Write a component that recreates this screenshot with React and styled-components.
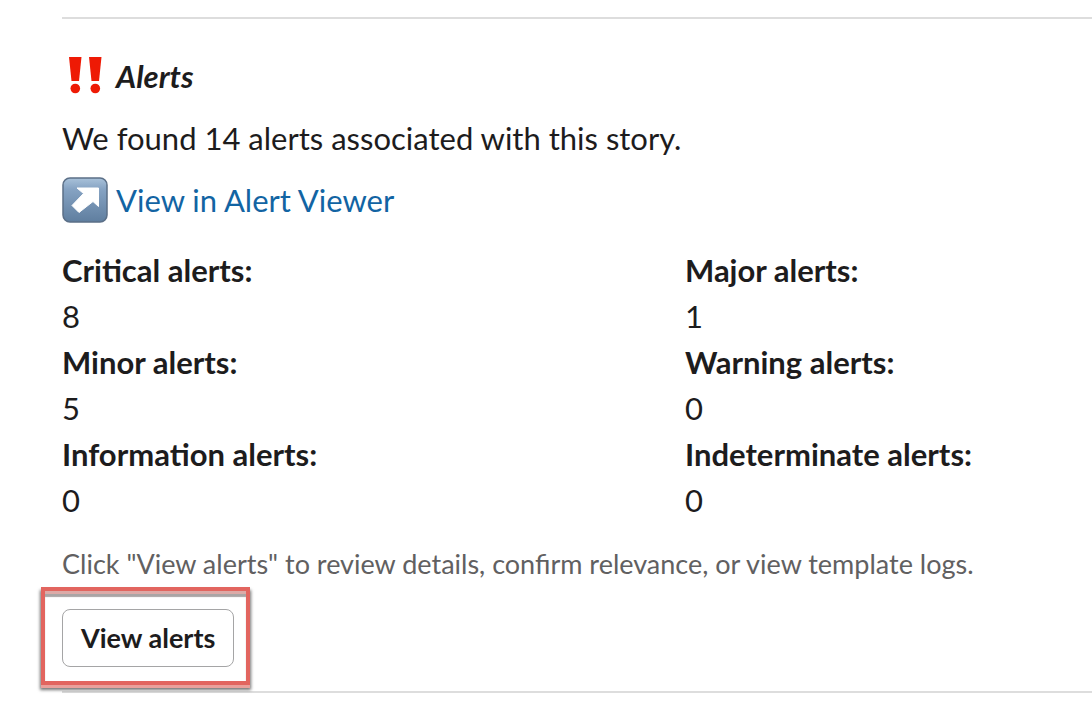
import React from "react";
import styled, { createGlobalStyle } from "styled-components";

const GlobalStyle = createGlobalStyle`
  *, *::before, *::after { box-sizing: border-box; }
  body {
    margin: 0;
    background: #fff;
    color: #1d1c1d;
    font-family: Lato, "Liberation Sans", sans-serif;
    font-size: 31px;
    line-height: 46px;
  }
`;

const Message = styled.main`
  display: flex;
  flex-direction: column;
  padding: 17px 0 13px 62px;
`;

const Divider = styled.hr`
  width: 100%;
  height: 2px;
  margin: 0;
  border: 0;
  background: #dddddd;
`;

const Section = styled.section`
  display: flex;
  flex-direction: column;
  gap: 16px;
  padding: 34px 0 24px;
`;

const Heading = styled.h2`
  display: flex;
  align-items: center;
  gap: 8px;
  margin: 0;
  font-size: 31px;
  font-weight: 700;
  font-style: italic;
`;

const Paragraph = styled.p`
  margin: 0;
`;

const LinkRow = styled.div`
  display: flex;
  align-items: center;
  gap: 8px;
`;

const ViewerLink = styled.a`
  color: #1264a3;
  text-decoration: none;
`;

const Emoji = styled.svg`
  flex: none;
  width: 46px;
  height: 46px;
`;

const Fields = styled.dl`
  display: grid;
  grid-template-columns: 623fr 407fr;
  margin: 0;
`;

const Term = styled.dt`
  font-weight: 700;
`;

const Value = styled.dd`
  margin: 0;
`;

const Context = styled.p`
  margin: 18px 0 22px;
  color: #616061;
  font-size: 27px;
  line-height: 46px;
`;

const Actions = styled.div`
  display: flex;
  margin-bottom: 24px;
`;

const Highlighted = styled.div`
  position: relative;
  display: flex;
`;

const HighlightFrame = styled.span`
  position: absolute;
  inset: -22px -16px -18px -21px;
  border: 4px solid #e2655f;
  box-shadow:
    0 3px 0 #eaa09b,
    0 4px 3px 1px rgba(0, 0, 0, 0.55),
    inset 0 3px 0 #dcaaa7,
    inset 0 6px 1px #aaa5a5;
  pointer-events: none;
`;

const Button = styled.button`
  height: 58px;
  padding: 0 18px;
  border: 1px solid #a5a5a6;
  border-radius: 8px;
  background: #fff;
  color: #1d1c1d;
  font-family: inherit;
  font-size: 27px;
  font-weight: 700;
  line-height: 46px;
`;

const counts = [
  ["Critical alerts:", 8],
  ["Major alerts:", 1],
  ["Minor alerts:", 5],
  ["Warning alerts:", 0],
  ["Information alerts:", 0],
  ["Indeterminate alerts:", 0],
];

function BangBang() {
  return (
    <Emoji viewBox="0 0 46 46" aria-hidden="true">
      <g fill="#ee1a05">
        <path d="M7 4h12.5l-2.5 24h-7.500z" />
        <circle cx="13.3" cy="35.5" r="4.800" />
        <path d="M27 4h12.500l-2.500 24h-7.500z" />
        <circle cx="33.300" cy="35.500" r="4.800" />
      </g>
    </Emoji>
  );
}

function ArrowUpRight() {
  return (
    <Emoji viewBox="0 0 46 46" aria-hidden="true">
      <defs>
        <linearGradient id="tile" x1="0" y1="0" x2="0" y2="1">
          <stop offset="0" stopColor="#a9c2da" />
          <stop offset="0.25" stopColor="#86a3c3" />
          <stop offset="1" stopColor="#5f7e9f" />
        </linearGradient>
      </defs>
      <rect x="1" y="1" width="44" height="44" rx="7" fill="url(#tile)" stroke="#5b6f87" strokeWidth="1.500" />
      <path d="M15 11h21.500v18.500l-5.500-5-14 11-7-7 11.500-12z" fill="#fff" stroke="#fff" strokeLinejoin="round" />
    </Emoji>
  );
}

export default function App() {
  return (
    <>
      <GlobalStyle />
      <Message>
        <Divider />
        <Section>
          <Heading><BangBang />Alerts</Heading>
          <Paragraph>We found 14 alerts associated with this story.</Paragraph>
          <LinkRow>
            <ArrowUpRight />
            <ViewerLink href="#alert-viewer">View in Alert Viewer</ViewerLink>
          </LinkRow>
        </Section>
        <Fields>
          {counts.map(([label, count]) => (
            <div key={label}>
              <Term>{label}</Term>
              <Value>{count}</Value>
            </div>
          ))}
        </Fields>
        <Context>Click "View alerts" to review details, confirm relevance, or view template logs.</Context>
        <Actions>
          <Highlighted>
            <Button type="button">View alerts</Button>
            <HighlightFrame />
          </Highlighted>
        </Actions>
        <Divider />
      </Message>
    </>
  );
}
